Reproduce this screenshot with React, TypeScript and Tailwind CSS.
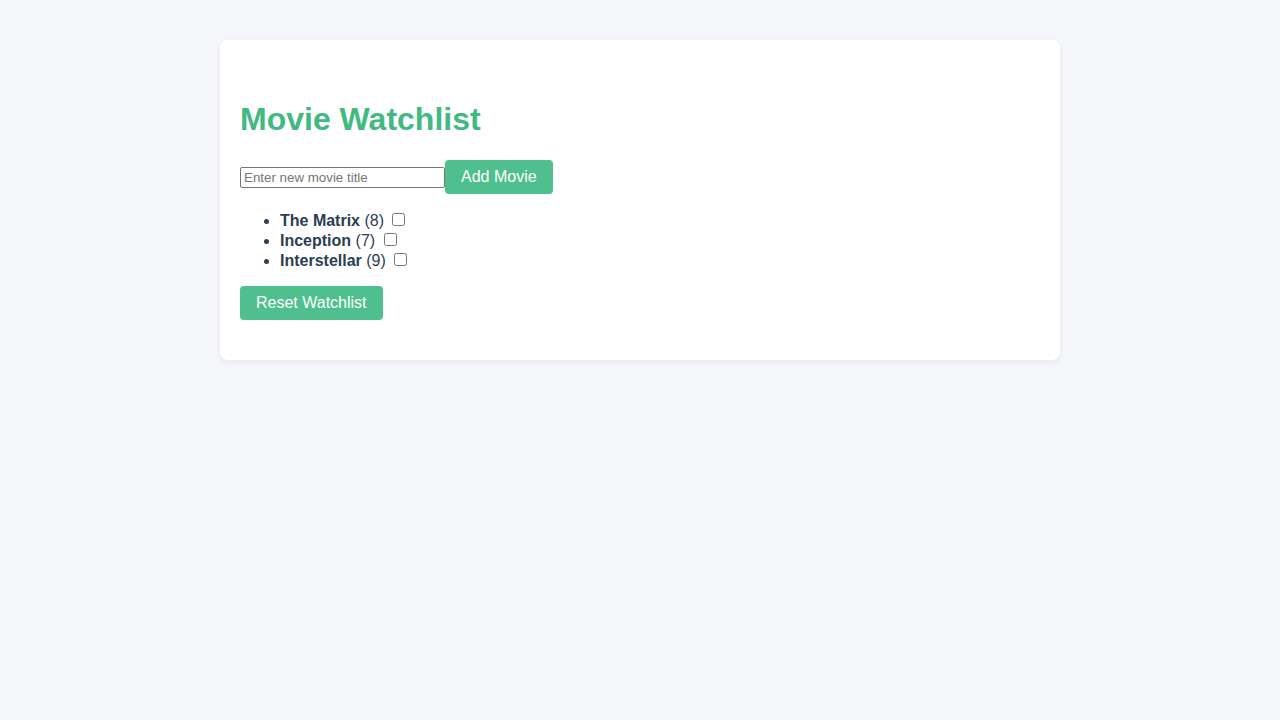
import React, { useState } from 'react';

type Movie = { id: number; title: string; rating: number; watched: boolean };

const INITIAL: Movie[] = [
  { id: 1, title: 'The Matrix', rating: 8, watched: false },
  { id: 2, title: 'Inception', rating: 7, watched: false },
  { id: 3, title: 'Interstellar', rating: 9, watched: false },
];

export default function App() {
  const [movies, setMovies] = useState<Movie[]>(INITIAL);
  const [title, setTitle] = useState('');

  const addMovie = () => {
    if (!title.trim()) return;
    setMovies([...movies, { id: Date.now(), title: title.trim(), rating: 5, watched: false }]);
    setTitle('');
  };

  const toggle = (id: number) => {
    setMovies(movies.map((m) => (m.id === id ? { ...m, watched: !m.watched } : m)));
  };

  return (
    <div className="min-h-screen bg-[#f5f6fa] pt-[40px] font-['Liberation_Sans',Arial,sans-serif] text-[#2c3e50]">
      <div className="mx-auto w-[840px] rounded-lg bg-white p-5 shadow-[0_2px_6px_rgba(0,0,0,0.06)]">
        {/* 标题 */}
        <h1 className="mt-[41px] mb-[22px] text-[32px] leading-[37px] font-bold text-[#42b983]">Movie Watchlist</h1>

        {/* 添加电影 */}
        <div className="flex items-center">
          <input
            className="h-[21px] w-[205px] rounded-[2px] border border-[#767676] px-[3px] text-[13.33px] text-black placeholder:text-[#757575]"
            placeholder="Enter new movie title"
            value={title}
            onChange={(e) => setTitle(e.target.value)}
          />
          <button
            className="h-[34px] rounded bg-[#4fc08d] px-4 text-base text-white"
            onClick={addMovie}
          >
            Add Movie
          </button>
        </div>

        {/* 列表 */}
        <ul className="mt-4 mb-[15px] list-disc pt-[1px] pl-10 text-base">
          {movies.map((m) => (
            <li key={m.id} className="leading-5">
              <strong>{m.title}</strong> ({m.rating}){' '}
              <input
                type="checkbox"
                className="ml-[4px] h-[13px] w-[13px] align-[0px]"
                checked={m.watched}
                onChange={() => toggle(m.id)}
              />
            </li>
          ))}
        </ul>

        <button
          className="mb-5 h-[34px] rounded bg-[#4fc08d] px-4 text-base text-white"
          onClick={() => setMovies(INITIAL)}
        >
          Reset Watchlist
        </button>
      </div>
    </div>
  );
}
